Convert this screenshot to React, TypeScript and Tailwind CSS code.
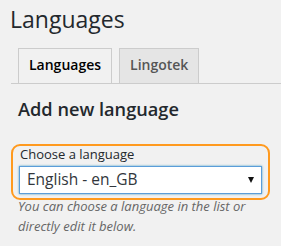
export default function App() {
  return (
    <div className="w-[281px] h-[246px] overflow-hidden bg-[#f1f1f1] pl-[10px] font-['Open_Sans',sans-serif] text-[#23282d]">
      <h1 className="pt-[5px] text-[23px] leading-[29px] font-normal">Languages</h1>

      <div className="mt-[14px] ml-px flex items-end border-b border-[#ccc]">
        <div className="-mb-px ml-[7px] border border-[#ccc] bg-[#f1f1f1] px-[10px] pt-[4px] pb-[6px] text-[14px] leading-[24px] font-semibold text-black">
          Languages
        </div>
        <div className="ml-[7px] border border-b-0 border-[#ccc] bg-[#e5e5e5] px-[10px] pt-[4px] pb-[6px] text-[14px] leading-[24px] font-semibold text-[#555]">
          Lingotek
        </div>
      </div>

      <h2 className="ml-[8px] mt-[13px] text-[18.2px] leading-[24px] font-semibold">Add new language</h2>

      <div className="mt-[23px] ml-px w-[259px] rounded-[9px] border-2 border-[#ff9a1f] px-[6px] pb-[4px]">
        <label className="block pl-px text-[13px] leading-[16px]">Choose a language</label>
        <div className="mt-[4px] flex h-[28px] items-center justify-between border border-[#5b9dd9] bg-white pl-[7px] pr-[7px] pb-[2px] shadow-[0_0_2px_rgba(30,140,190,0.8)]">
          <span className="text-[15.5px] leading-[20px] text-[#32373c]">English - en_GB</span>
          <svg width="6" height="6" viewBox="0 0 6 6" className="mt-[2px]">
            <polygon points="0,0 6,0 3,6" fill="#111" />
          </svg>
        </div>
      </div>

      <p className="ml-[8px] -mt-[3px] w-[250px] text-[13px] leading-[19.5px] italic text-[#666]">
        You can choose a language in the list or directly edit it below.
      </p>
    </div>
  );
}
